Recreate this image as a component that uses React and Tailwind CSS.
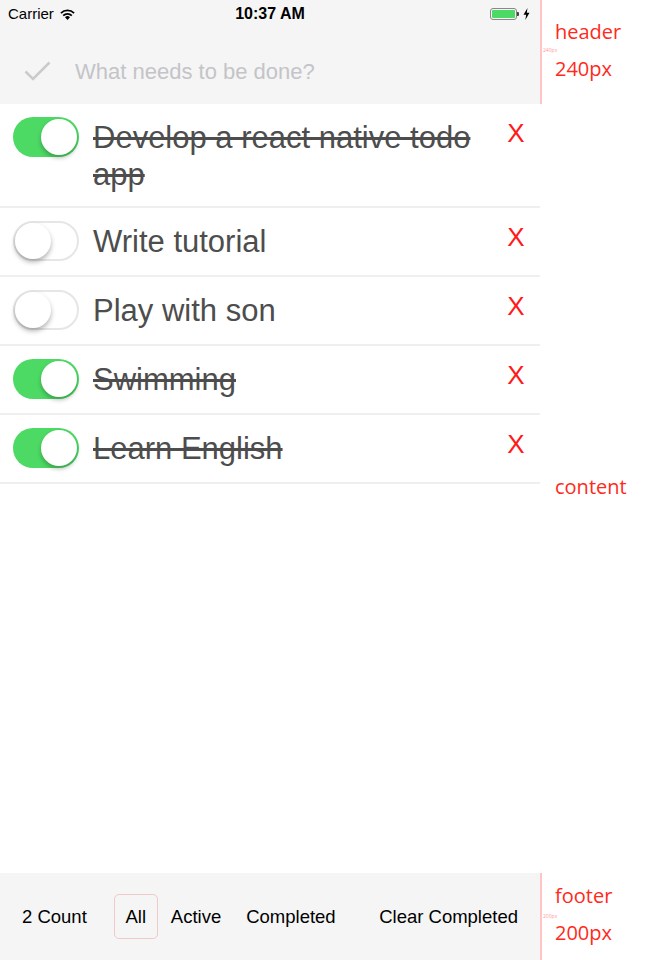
import React from 'react';

const todos = [
  { id: 1, text: 'Develop a react native todo app', done: true },
  { id: 2, text: 'Write tutorial', done: false },
  { id: 3, text: 'Play with son', done: false },
  { id: 4, text: 'Swimming', done: true },
  { id: 5, text: 'Learn English', done: true },
];

const Toggle = ({ on }) => {
  if (on) {
    return (
      <div className="relative w-[66px] h-[40px] rounded-full bg-[#4cd964] shrink-0">
        <div className="absolute right-[2px] top-[2px] w-[36px] h-[36px] rounded-full bg-white shadow-[0_3px_4px_rgba(0,0,0,0.25)]" />
      </div>
    );
  }
  return (
    <div className="relative w-[66px] h-[40px] rounded-full bg-white border-2 border-[#e6e6e6] shrink-0">
      <div className="absolute left-0 top-0 w-[36px] h-[36px] rounded-full bg-white shadow-[0_3px_5px_rgba(0,0,0,0.3)]" />
    </div>
  );
};

const StatusBar = () => (
  <div className="h-[28px] flex items-center justify-between px-[8px] text-black">
    <div className="flex items-center gap-[6px] w-[120px]">
      <span className="text-[15px]">Carrier</span>
      <svg width="15" height="11" viewBox="0 0 15 11">
        <path d="M7.5 11 L5 8.2 A3.6 3.6 0 0 1 10 8.2 Z" fill="#000" />
        <path d="M2.6 5.9 A7 7 0 0 1 12.4 5.9 L11.2 7.2 A5.2 5.2 0 0 0 3.8 7.2 Z" fill="#000" />
        <path d="M0.3 3.5 A10.3 10.3 0 0 1 14.7 3.5 L13.5 4.8 A8.5 8.5 0 0 0 1.5 4.8 Z" fill="#000" />
      </svg>
    </div>
    <span className="text-[16px] font-bold">10:37 AM</span>
    <div className="flex items-center justify-end gap-[4px] w-[120px] pr-[2px]">
      <div className="flex items-center">
        <div className="w-[27px] h-[12px] rounded-[3px] border border-[#888] p-[1px]">
          <div className="w-full h-full rounded-[1px] bg-[#4cd964]" />
        </div>
        <div className="w-[2px] h-[4px] bg-[#444] rounded-r-[1px]" />
      </div>
      <svg width="7" height="12" viewBox="0 0 7 12">
        <path d="M4.5 0 L0.5 6.8 L3.2 6.8 L2.3 12 L6.5 4.8 L3.8 4.8 Z" fill="#000" />
      </svg>
    </div>
  </div>
);

const TodoRow = ({ todo, first }) => (
  <div
    className={
      'flex items-start border-b-2 border-[#efefef] pl-[13px] pr-[14px] pt-[13px] ' +
      (first ? 'pb-[13px]' : 'pb-[14px]')
    }
  >
    <Toggle on={todo.done} />
    <div
      className={
        'flex-1 ml-[14px] mt-[2px] text-[31px] leading-[37px] text-[#4d4d4d] ' +
        (todo.done ? 'line-through' : '')
      }
    >
      {todo.text}
    </div>
    <div className="w-[20px] ml-[8px] mt-0 text-[26px] leading-[32px] text-[#ff1a1a] text-center">X</div>
  </div>
);

export default function App() {
  return (
    <div
      className="flex w-[652px] h-[960px] bg-white overflow-hidden"
      style={{ fontFamily: '"Liberation Sans", Arial, sans-serif' }}
    >
      <div className="w-[540px] h-full flex flex-col">
        <div className="h-[104px] bg-[#f5f5f5] flex flex-col">
          <StatusBar />
          <div className="flex-1 flex items-center pl-[24px] pt-[10px]">
            <svg width="27" height="20" viewBox="0 0 27 20">
              <path d="M1.5 10.5 L9 18 L25.5 1.5" fill="none" stroke="#cbcbcb" strokeWidth="2.6" />
            </svg>
            <span className="ml-[24px] text-[22px] text-[#c4c4c8]">What needs to be done?</span>
          </div>
        </div>
        <div className="flex-1 bg-white">
          {todos.map((t, i) => (
            <TodoRow key={t.id} todo={t} first={i === 0} />
          ))}
        </div>
        <div className="h-[87px] bg-[#f5f5f5] flex items-center pl-[22px] pr-[22px] text-[18.5px] text-black">
          <span>2 Count</span>
          <div className="ml-[27px] w-[44px] h-[45px] border border-[#f0c9c9] rounded-[5px] flex items-center justify-center">
            All
          </div>
          <span className="ml-[13px]">Active</span>
          <span className="ml-[25px]">Completed</span>
          <span className="ml-auto">Clear Completed</span>
        </div>
      </div>
      <div
        className="flex-1 h-full flex flex-col text-[#ff2a1a]"
        style={{ fontFamily: '"Open Sans", sans-serif' }}
      >
        <div className="h-[104px] relative flex">
          <div className="w-[2px] h-full bg-[#ffc4c4]" />
          <div className="flex flex-col pl-[13px] pt-[18px] gap-[9px] text-[20px] leading-[28px]">
            <span>header</span>
            <span>240px</span>
          </div>
          <span className="absolute left-[3px] top-[47px] text-[5px] text-[#ff9a9a]">240px</span>
        </div>
        <div className="flex-1 pl-[15px] pt-[369px] text-[20px] leading-[28px]">content</div>
        <div className="h-[87px] relative flex">
          <div className="w-[2px] h-full bg-[#ffc4c4]" />
          <div className="flex flex-col pl-[13px] pt-[9px] gap-[9px] text-[20px] leading-[28px]">
            <span>footer</span>
            <span>200px</span>
          </div>
          <span className="absolute left-[3px] top-[40px] text-[5px] text-[#ff9a9a]">200px</span>
        </div>
      </div>
    </div>
  );
}
